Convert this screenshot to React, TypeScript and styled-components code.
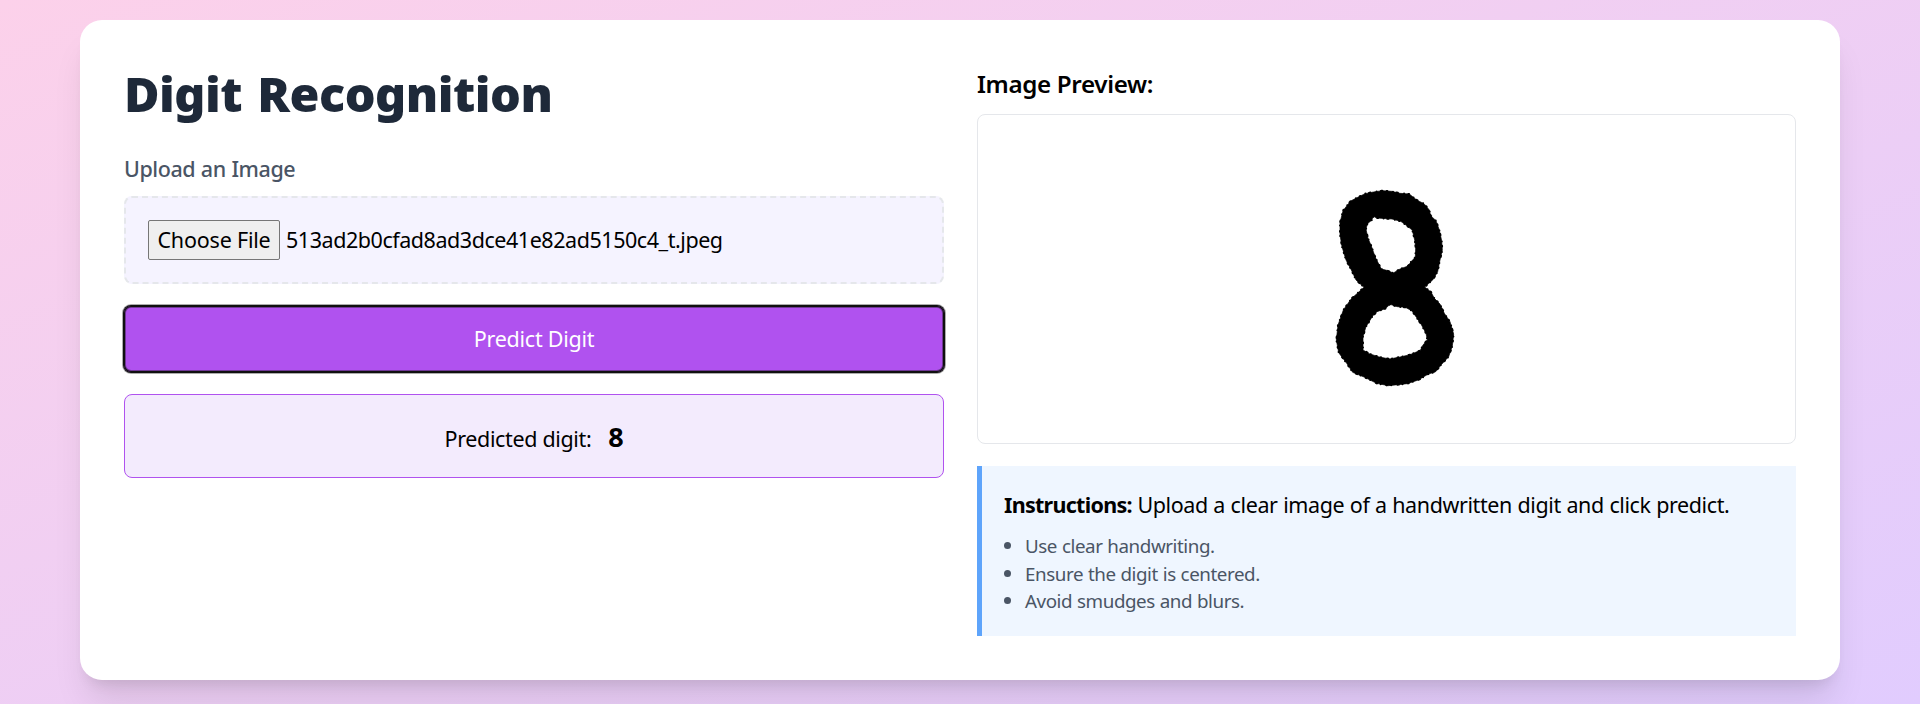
import React from 'react';
import styled, { createGlobalStyle } from 'styled-components';

const GlobalStyle = createGlobalStyle`
  *, *::before, *::after { box-sizing: border-box; margin: 0; padding: 0; }
  body { overflow: hidden; }
  button { font: inherit; }
`;

const Page = styled.div`
  height: 704px;
  padding: 20px 80px 0;
  background: linear-gradient(to bottom right, #fcd1ea, #e1ccfe);
  font-family: 'Noto Sans', 'Segoe UI', sans-serif;
  font-size: 21.5px;
  line-height: 33px;
  color: #000;
`;

const Card = styled.main`
  display: grid;
  grid-template-columns: 820px 819px;
  column-gap: 33px;
  height: 660px;
  padding: 44px;
  border-radius: 22px;
  background: #fff;
  box-shadow: 0 27px 34px -7px rgba(0, 0, 0, 0.1), 0 11px 14px -8px rgba(0, 0, 0, 0.1);
`;

const Column = styled.section`
  display: flex;
  flex-direction: column;
`;

const Title = styled.h1`
  height: 55px;
  margin-bottom: 33px;
  padding-top: 2px;
  font-size: 48.5px;
  line-height: 55px;
  font-weight: 900;
  letter-spacing: -0.5px;
  word-spacing: 3px;
  color: #1e2939;
`;

const Label = styled.label`
  margin-bottom: 11px;
  font-weight: 500;
  letter-spacing: -0.43px;
  word-spacing: 0.5px;
  color: #4a5565;
`;

const DropZone = styled.div`
  display: flex;
  align-items: center;
  height: 88px;
  padding: 0 22px;
  border: 2px dashed #e5e7eb;
  border-radius: 8px;
  background: #f5f3ff;
`;

const FileButton = styled.button`
  width: 132px;
  height: 40px;
  margin-right: 6px;
  border: 1px solid #767676;
  border-radius: 2px;
  background: #efefef;
  letter-spacing: -0.2px;
  line-height: 36px;
  white-space: nowrap;
`;

const FileName = styled.span`
  padding-bottom: 1px;
  letter-spacing: -0.45px;
`;

const PredictButton = styled.button`
  height: 66px;
  margin: 22px 0;
  padding-bottom: 2px;
  border: 0;
  border-radius: 7px;
  background: #b052ef;
  box-shadow:
    0 0 0 1px #101010,
    0 0 0 2px rgba(16, 16, 16, 0.35),
    inset 0 0 0 1px #101010,
    inset 0 0 0 2px rgba(16, 16, 16, 0.4);
  color: #fff;
  letter-spacing: -0.25px;
`;

const Result = styled.div`
  display: flex;
  align-items: baseline;
  justify-content: center;
  height: 84px;
  padding-top: 23px;
  border: 1px solid #b052ef;
  border-radius: 8px;
  background: #f3ebfd;
  letter-spacing: -0.35px;
`;

const ResultDigit = styled.strong`
  margin-left: 17px;
  font-size: 27px;
  line-height: 38px;
`;

const PreviewTitle = styled.h2`
  height: 38px;
  margin-bottom: 12px;
  padding-top: 1px;
  font-size: 24.2px;
  line-height: 38px;
  font-weight: 650;
  letter-spacing: -0.35px;
`;

const Preview = styled.div`
  height: 330px;
  padding: 55px 0 0 342px;
  border: 1px solid #e5e7eb;
  border-radius: 8px;
`;

const Instructions = styled.div`
  height: 170px;
  margin-top: 22px;
  padding: 22px;
  border-left: 5px solid #5ea4fb;
  background: #eff6ff;
  letter-spacing: -0.4px;
  word-spacing: 0.4px;
`;

const Strong = styled.strong`
  letter-spacing: -0.72px;
`;

const Tips = styled.ul`
  margin-top: 12px;
  list-style: none;
  font-size: 18.8px;
  line-height: 27.5px;
  letter-spacing: -0.43px;
  word-spacing: 0.4px;
  color: #4a5565;
`;

const Tip = styled.li`
  display: flex;
  align-items: center;

  &::before {
    content: '';
    width: 7px;
    height: 7px;
    margin: 0 14px 2px 0;
    border-radius: 50%;
    background: #4a5565;
  }
`;

const OUTER =
  'M187 62 L215 64 L240 70 L268 72 L290 90 L312 101 L328 120 L332 137 L348 152 L358 180 L365 212 L367 240 L360 270 L353 305 L338 330 L314 351 L333 366 L343 385 L360 402 L373 430 L390 455 L401 492 L397 528 L386 560 L363 585 L346 606 L325 612 L295 630 L262 641 L205 647 L170 640 L132 621 L98 607 L80 580 L56 548 L49 510 L54 465 L70 420 L94 386 L132 352 L108 330 L94 300 L78 270 L66 230 L60 195 L60 158 L69 122 L92 93 L115 81 L135 71 L160 66 Z ';
const HOLES =
  'M160 139 L170 144 L216 147 L242 154 L262 168 L277 181 L284 210 L287 232 L286 262 L274 274 L264 288 L240 297 L220 309 L200 301 L184 297 L166 262 L154 228 L144 205 L138 178 L142 161 L155 151 Z ' +
  'M210 403 L232 410 L256 412 L275 422 L290 443 L304 464 L318 490 L322 510 L309 525 L301 541 L270 554 L240 561 L208 567 L175 560 L148 551 L129 540 L129 500 L138 470 L158 438 L171 425 L196 416 Z';

const Drawing = () => (
  <svg width="150" height="230" viewBox="0 0 450 690" aria-label="Handwritten digit">
    <path d={OUTER + HOLES} fillRule="evenodd" stroke="#000" strokeWidth="2" strokeLinejoin="round" />
    <path
      d={OUTER + HOLES}
      fill="none"
      stroke="#000"
      strokeWidth="6"
      strokeLinecap="round"
      strokeDasharray="0 13 2 17 0 11 4 19"
    />
  </svg>
);

const tips = ['Use clear handwriting.', 'Ensure the digit is centered.', 'Avoid smudges and blurs.'];

export default function App() {
  return (
    <Page>
      <GlobalStyle />
      <Card>
        <Column>
          <Title>Digit Recognition</Title>
          <Label>Upload an Image</Label>
          <DropZone>
            <FileButton>Choose File</FileButton>
            <FileName>513ad2b0cfad8ad3dce41e82ad5150c4_t.jpeg</FileName>
          </DropZone>
          <PredictButton>Predict Digit</PredictButton>
          <Result>
            Predicted digit: <ResultDigit>8</ResultDigit>
          </Result>
        </Column>
        <Column>
          <PreviewTitle>Image Preview:</PreviewTitle>
          <Preview>
            <Drawing />
          </Preview>
          <Instructions>
            <p>
              <Strong>Instructions:</Strong> Upload a clear image of a handwritten digit and click predict.
            </p>
            <Tips>
              {tips.map((tip) => (
                <Tip key={tip}>{tip}</Tip>
              ))}
            </Tips>
          </Instructions>
        </Column>
      </Card>
    </Page>
  );
}
